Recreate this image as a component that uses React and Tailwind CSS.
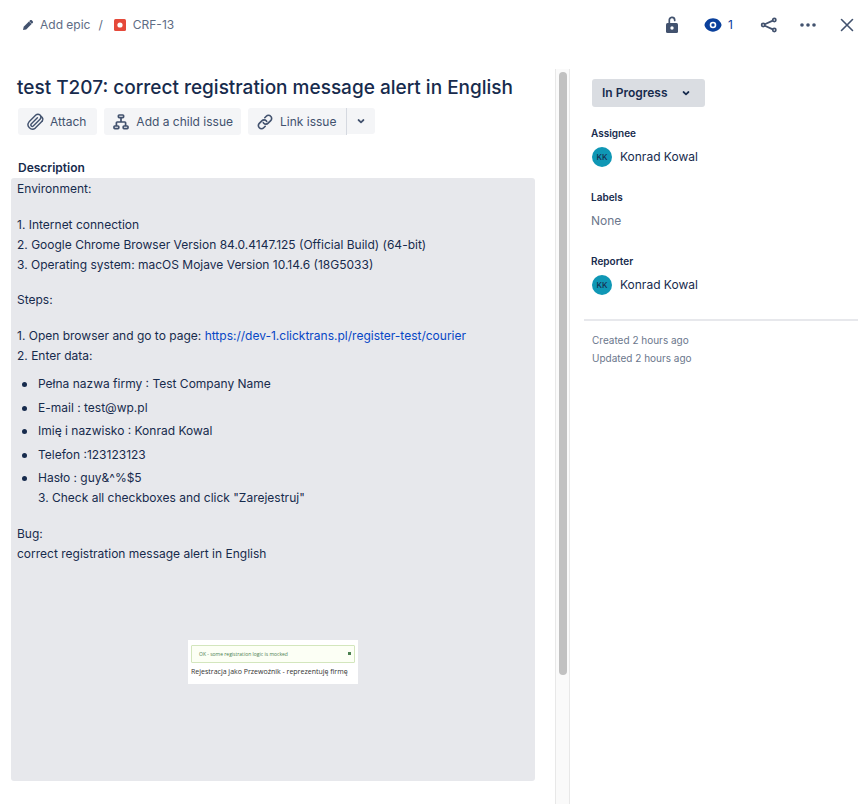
const INTER = "font-['Inter','Liberation_Sans',sans-serif]";

function PencilIcon() {
  return (
    <svg width="12" height="12" viewBox="0 0 12 12" fill="currentColor" aria-hidden="true">
      <path d="M1 11l.7-3.200L6.900 2.400l2.700 2.700L4.200 10.400 1 11z" />
      <path d="M7.200 2.200l.9-.9c.5-.5 1.200-.5 1.700 0l.9.9c.5.5.5 1.200 0 1.700l-.9.9-2.600-2.600z" />
    </svg>
  );
}

function BugIcon() {
  return (
    <svg width="12" height="12" viewBox="0 0 12 12" aria-hidden="true">
      <rect width="12" height="12" rx="1.500" fill="#e5493a" />
      <circle cx="6" cy="6" r="2.600" fill="#fff" />
    </svg>
  );
}

function LockIcon() {
  return (
    <svg width="14" height="18" viewBox="0 0 14 18" aria-hidden="true">
      <rect x="1" y="7" width="12" height="10" rx="1.500" fill="#42526e" />
      <path d="M4.300 7.500V4.400a2.700 2.700 0 0 1 5.400-.6v.6" fill="none" stroke="#42526e" strokeWidth="1.700" strokeLinecap="round" />
      <circle cx="7" cy="12" r="1.700" fill="#fff" />
    </svg>
  );
}

function EyeIcon() {
  return (
    <svg width="18" height="14" viewBox="0 0 18 14" aria-hidden="true">
      <path d="M9 0.300c4.400 0 7.300 3 8.300 5.600.3.700.3 1.500 0 2.200-1 2.600-3.900 5.600-8.300 5.600S1.700 10.700.7 8.100c-.3-.7-.3-1.500 0-2.200C1.700 3.300 4.600.3 9 .3z" fill="#0a409c" />
      <circle cx="9" cy="7" r="2.500" fill="none" stroke="#fff" strokeWidth="1.600" />
    </svg>
  );
}

function ShareIcon() {
  return (
    <svg width="18" height="18" viewBox="0 0 18 18" fill="none" stroke="#42526e" strokeWidth="1.700" aria-hidden="true">
      <circle cx="3.200" cy="9" r="1.600" />
      <circle cx="14.300" cy="4" r="1.600" />
      <circle cx="14.300" cy="14" r="1.600" />
      <path d="M4.800 8.200l8-3.600M4.800 9.800l8 3.600" />
    </svg>
  );
}

function MoreIcon() {
  return (
    <svg width="18" height="6" viewBox="0 0 18 6" fill="#42526e" aria-hidden="true">
      <circle cx="3" cy="3" r="1.800" />
      <circle cx="9" cy="3" r="1.800" />
      <circle cx="15" cy="3" r="1.800" />
    </svg>
  );
}

function CloseIcon() {
  return (
    <svg width="14" height="14" viewBox="0 0 14 14" fill="none" stroke="#42526e" strokeWidth="1.600" strokeLinecap="round" aria-hidden="true">
      <path d="M1.500 1.500l11 11M12.500 1.500l-11 11" />
    </svg>
  );
}

function AttachIcon() {
  return (
    <svg width="18" height="18" viewBox="0 0 24 24" fill="none" stroke="currentColor" strokeWidth="1.900" strokeLinecap="round" strokeLinejoin="round" aria-hidden="true">
      <path d="M21.400 11.100l-9 9a5.900 5.900 0 0 1-8.300-8.300l9-9a3.900 3.900 0 0 1 5.600 5.600l-9 9a2 2 0 0 1-2.800-2.800l8.300-8.300" />
      <path d="M21.400 11.100a4.200 4.200 0 0 0-1.600-6.700" />
    </svg>
  );
}

function ChildIcon() {
  return (
    <svg width="18" height="18" viewBox="0 0 18 18" fill="none" stroke="currentColor" strokeWidth="1.700" strokeLinejoin="round" aria-hidden="true">
      <rect x="6.400" y="2" width="5.200" height="2.600" rx=".8" />
      <rect x="2" y="13" width="4.800" height="2.600" rx=".8" />
      <rect x="11.200" y="13" width="4.800" height="2.600" rx=".8" />
      <path d="M9 5v4M4.400 13V9.800c0-.5.300-.8.800-.8h7.600c.5 0 .8.300.8.800V13" />
    </svg>
  );
}

function LinkIcon() {
  return (
    <svg width="18" height="18" viewBox="0 0 24 24" fill="none" stroke="currentColor" strokeWidth="2.200" strokeLinecap="round" aria-hidden="true">
      <path d="M11.700 6.300l2-2a4.100 4.100 0 0 1 5.900 0a4.100 4.100 0 0 1 0 5.900l-3.400 3.400a4.100 4.100 0 0 1-5.900 0l-.6-.8" />
      <path d="M12.300 17.700l-2 2a4.100 4.100 0 0 1-5.900 0a4.100 4.100 0 0 1 0-5.900l3.400-3.400a4.100 4.100 0 0 1 5.900 0l.6.8" />
    </svg>
  );
}

function ChevronIcon() {
  return (
    <svg width="8" height="6" viewBox="0 0 8 6" fill="none" stroke="currentColor" strokeWidth="1.700" strokeLinecap="round" strokeLinejoin="round" aria-hidden="true">
      <path d="M1.500 2L4 4.300 6.500 2" />
    </svg>
  );
}

function Header() {
  return (
    <header className="flex h-[50px] items-center justify-between pr-3.5 pl-[22px] text-[#5e6c84]">
      <nav aria-label="Breadcrumb" className="flex items-center">
        <button type="button" className="flex items-center gap-1.5">
          <span className="text-[#42526e]"><PencilIcon /></span>
          Add epic
        </button>
        <span className="mx-2">/</span>
        <a href="#CRF-13" className="ml-[3px] flex items-center gap-[7px]">
          <BugIcon />
          CRF-13
        </a>
      </nav>
      <div className="flex items-center">
        <button type="button" aria-label="Restrictions" className="mr-[25px]"><LockIcon /></button>
        <button type="button" aria-label="Watchers" className="mr-[27px] flex items-center gap-1.5 text-[#0a409c]">
          <EyeIcon />1
        </button>
        <button type="button" aria-label="Share" className="mr-[21px]"><ShareIcon /></button>
        <button type="button" aria-label="Actions" className="mr-[23px]"><MoreIcon /></button>
        <button type="button" aria-label="Close"><CloseIcon /></button>
      </div>
    </header>
  );
}

const tool = "flex h-[27px] items-center gap-1.5 bg-[#f4f5f7] pl-2";

function Toolbar() {
  return (
    <div className="mt-1.5 ml-[7px] flex gap-[7px] text-[#42526e]">
      <button type="button" className={tool + " rounded-[3px] pr-[11px]"}><AttachIcon />Attach</button>
      <button type="button" className={tool + " rounded-[3px] pr-2"}><ChildIcon />Add a child issue</button>
      <div className="flex">
        <button type="button" className={tool + " rounded-l-[3px] border-r border-[#d5d9e0] pr-2.5"}><LinkIcon />Link issue</button>
        <button type="button" aria-label="More link options" className="flex h-[26px] w-7 items-center justify-center rounded-r-[3px] bg-[#f4f5f7]"><ChevronIcon /></button>
      </div>
    </div>
  );
}

const fields = [
  "Pełna nazwa firmy : Test Company Name",
  "E-mail : test@wp.pl",
  "Imię i nazwisko : Konrad Kowal",
  "Telefon :123123123",
  "Hasło : guy&^%$5",
];

function Attachment() {
  return (
    <figure className="mx-auto mt-[76px] h-[44px] w-[170px] bg-white px-[3px] pt-[5px] font-['Open_Sans','Noto_Sans',sans-serif]">
      <div className="flex h-[18px] items-center justify-between rounded-[1px] border border-[#d3e6bd] bg-[#fcfff5] pr-[3px] pl-[7px] text-[5px] text-[#4b8050]">
        <span className="font-medium">OK - some registration logic is mocked</span>
        <span className="mb-0.5 size-[3px] bg-[#4b8050]" />
      </div>
      <figcaption className="mt-1 text-[7px] leading-[10px] font-medium whitespace-nowrap text-[#333]">
        Rejestracja jako Przewoźnik - reprezentuję firmę
      </figcaption>
    </figure>
  );
}

function Description() {
  return (
    <section>
      <h2 className="mt-[23px] ml-[7px] font-semibold">Description</h2>
      <div className="rounded-[3px] bg-[#e7e8ec] px-1.5 pt-px pb-[97px]">
        <p>Environment:</p>
        <p className="mt-4">
          1. Internet connection<br />
          2. Google Chrome Browser Version 84.0.4147.125 (Official Build) (64-bit)<br />
          3. Operating system: macOS Mojave Version 10.14.6 (18G5033)
        </p>
        <p className="mt-[15px]">Steps:</p>
        <p className="mt-4">
          1. Open browser and go to page:{" "}
          <a href="https://dev-1.clicktrans.pl/register-test/courier" className="text-[#0747c6]">
            https://dev-1.clicktrans.pl/register-test/courier
          </a>
          <br />
          2. Enter data:
        </p>
        <ul className="mt-2">
          {fields.map((field, i) => (
            <li key={field} className="flex gap-[11px] odd:mb-1 even:mb-[3px] last:mb-0">
              <span className="mt-2 ml-[5px] size-[5px] shrink-0 rounded-full bg-[#172b4d]" />
              <div>
                {field}
                {i === fields.length - 1 && <p>3. Check all checkboxes and click "Zarejestruj"</p>}
              </div>
            </li>
          ))}
        </ul>
        <p className="mt-4">
          Bug:<br />
          correct registration message alert in English
        </p>
        <Attachment />
      </div>
    </section>
  );
}

function Person({ role }) {
  return (
    <section className="pl-[21px]">
      <h2 className="text-[10px] font-semibold">{role}</h2>
      <div className="mt-[3px] flex items-center gap-2 pl-px">
        <span className="flex size-5 items-center justify-center rounded-full bg-[#0f97b5] text-[8px] font-medium">KK</span>
        <span className="pt-px">Konrad Kowal</span>
      </div>
    </section>
  );
}

function Sidebar() {
  return (
    <aside className="w-[298px] shrink-0 pt-[10px] pr-2.5">
      <button type="button" className="ml-[22px] flex h-7 w-[113px] items-center gap-3.5 rounded-[3px] bg-[#dadde2] px-2.5 font-semibold">
        In Progress
        <ChevronIcon />
      </button>
      <div className="mt-4 flex flex-col gap-5">
        <Person role="Assignee" />
        <section className="pl-[21px]">
          <h2 className="text-[10px] font-semibold">Labels</h2>
          <p className="mt-1 text-[#6b778c]">None</p>
        </section>
        <Person role="Reporter" />
      </div>
      <hr className="mt-6 ml-3.5 border-t-2 border-[#e7e8ec]" />
      <div className="mt-2.5 pl-[22px] text-[10px] leading-[18px] text-[#6b778c]">
        <p>Created 2 hours ago</p>
        <p>Updated 2 hours ago</p>
      </div>
    </aside>
  );
}

export default function App() {
  return (
    <div className={INTER + " flex min-h-screen flex-col bg-white text-[12px] leading-5 text-[#172b4d]"}>
      <Header />
      <div className="mt-[19px] flex flex-1">
        <main className="min-w-0 flex-1 pr-5 pl-[11px]">
          <h1 className="mt-[5px] ml-1.5 text-[19px] leading-7 font-medium">
            test T207: correct registration message alert in English
          </h1>
          <Toolbar />
          <Description />
        </main>
        <div className="flex w-[15px] shrink-0 justify-center border-x border-[#e8e8e8] bg-[#fafafa] pt-[3px]" aria-hidden="true">
          <div className="h-[82.4%] w-2 rounded-full bg-[#c1c1c1]" />
        </div>
        <Sidebar />
      </div>
    </div>
  );
}
